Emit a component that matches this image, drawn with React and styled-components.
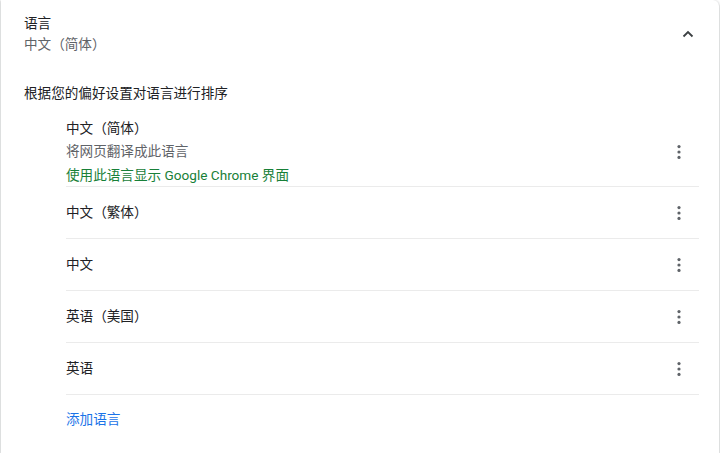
import React from "react";
import styled, { createGlobalStyle } from "styled-components";

const GlobalStyle = createGlobalStyle`
  html, body {
    margin: 0;
    padding: 0;
    background: #ffffff;
  }
  body {
    font-family: Roboto, "Noto Sans CJK SC", "Noto Sans", sans-serif;
    -webkit-font-smoothing: antialiased;
  }
`;

const languages = [
  { name: "中文（简体）", primary: true },
  { name: "中文（繁体）" },
  { name: "中文" },
  { name: "英语（美国）" },
  { name: "英语" },
];

function ChevronUp() {
  return (
    <svg width="14" height="10" viewBox="0 0 14 10" aria-hidden="true">
      <polyline
        points="2.5,7.5 7,3 11.5,7.5"
        fill="none"
        stroke="#3c4043"
        strokeWidth="1.8"
      />
    </svg>
  );
}

function MoreVert() {
  return (
    <svg width="6" height="16" viewBox="0 0 6 16" aria-hidden="true">
      <circle cx="3" cy="2.6" r="1.6" fill="#5f6368" />
      <circle cx="3" cy="8" r="1.6" fill="#5f6368" />
      <circle cx="3" cy="13.4" r="1.6" fill="#5f6368" />
    </svg>
  );
}

export default function App() {
  return (
    <>
      <GlobalStyle />
      <Card>
        <Header>
          <Titles>
            <Title>语言</Title>
            <Subtitle>中文（简体）</Subtitle>
          </Titles>
          <IconButton>
            <ChevronUp />
          </IconButton>
        </Header>

        <Description>根据您的偏好设置对语言进行排序</Description>

        <List>
          {languages.map((lang) => (
            <Row key={lang.name} $primary={lang.primary}>
              <RowText>
                <Name>{lang.name}</Name>
                {lang.primary && (
                  <>
                    <Secondary>将网页翻译成此语言</Secondary>
                    <UiNote>使用此语言显示 Google Chrome 界面</UiNote>
                  </>
                )}
              </RowText>
              <MenuButton>
                <MoreVert />
              </MenuButton>
            </Row>
          ))}
          <AddRow>
            <AddLink>添加语言</AddLink>
          </AddRow>
        </List>
      </Card>
    </>
  );
}

const Card = styled.div`
  margin-left: 1px;
  width: 718px;
  min-height: 100vh;
  background: #ffffff;
  border-radius: 0 6px 0 0;
  box-shadow: 0 1px 2px rgba(60, 64, 67, 0.3),
    0 1px 3px 1px rgba(60, 64, 67, 0.15);
  box-sizing: border-box;
  font-size: 13.6px;
  color: #202124;
`;

const Header = styled.div`
  display: flex;
  align-items: center;
  justify-content: space-between;
  padding: 13px 11px 0 23px;
`;

const Titles = styled.div`
  display: flex;
  flex-direction: column;
`;

const Title = styled.div`
  line-height: 21px;
  color: #202124;
`;

const Subtitle = styled.div`
  line-height: 21px;
  color: #5f6368;
`;

const IconButton = styled.div`
  width: 40px;
  height: 40px;
  display: flex;
  align-items: center;
  justify-content: center;
  cursor: pointer;
`;

const Description = styled.div`
  margin-top: 28px;
  padding: 0 23px;
  line-height: 21px;
`;

const List = styled.div`
  margin: 14px 20px 0 65px;
  display: flex;
  flex-direction: column;
`;

const Row = styled.div`
  display: flex;
  align-items: center;
  justify-content: space-between;
  min-height: ${({ $primary }) => ($primary ? "68px" : "51px")};
  border-bottom: 1px solid #ebebeb;
`;

const RowText = styled.div`
  display: flex;
  flex-direction: column;
`;

const Name = styled.div`
  line-height: 21px;
  color: #202124;
`;

const Secondary = styled.div`
  margin-top: 1px;
  line-height: 22px;
  color: #5f6368;
`;

const UiNote = styled.div`
  margin-top: 3px;
  line-height: 21px;
  color: #188038;
`;

const MenuButton = styled.div`
  width: 40px;
  height: 40px;
  display: flex;
  align-items: center;
  justify-content: center;
  cursor: pointer;
`;

const AddRow = styled.div`
  display: flex;
  align-items: center;
  height: 48px;
`;

const AddLink = styled.span`
  color: #1a73e8;
  line-height: 21px;
  cursor: pointer;
`;
